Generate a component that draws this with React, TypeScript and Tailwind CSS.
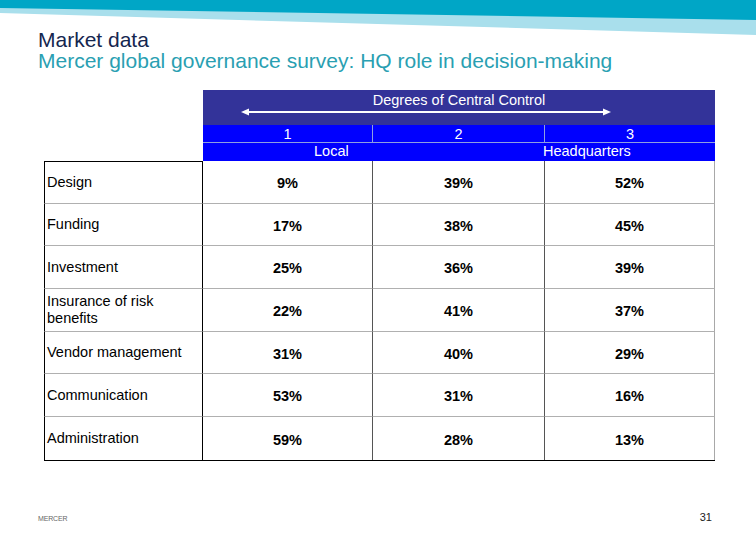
const rows = [
  { label: "Design", values: ["9%", "39%", "52%"] },
  { label: "Funding", values: ["17%", "38%", "45%"] },
  { label: "Investment", values: ["25%", "36%", "39%"] },
  { label: "Insurance of risk benefits", values: ["22%", "41%", "37%"] },
  { label: "Vendor management", values: ["31%", "40%", "29%"] },
  { label: "Communication", values: ["53%", "31%", "16%"] },
  { label: "Administration", values: ["59%", "28%", "13%"] },
];

function Banner() {
  return (
    <svg className="absolute left-0 top-0" width="756" height="40" viewBox="0 0 756 40">
      <polygon points="0,0 756,0 756,35 0,13" fill="#a9dfec" />
      <polygon points="0,0 756,0 756,20 0,8" fill="#00a6c6" />
    </svg>
  );
}

export default function App() {
  return (
    <div
      className="relative w-[756px] h-[540px] bg-white overflow-hidden flex flex-col"
      style={{ fontFamily: '"Liberation Sans", Arial, sans-serif' }}
    >
      <Banner />

      {/* Title */}
      <div className="relative pt-[29px] pl-[38px] text-[21px] leading-[21px]">
        <div className="text-[#14264f]">Market data</div>
        <div className="text-[#2a9fb2]">Mercer global governance survey: HQ role in decision-making</div>
      </div>

      {/* Table */}
      <div className="ml-[44px] mt-[19px] w-[671px] text-[14.5px] text-black">
        <div className="flex">
          <div className="w-[159px] shrink-0" />
          <div className="w-[512px] text-white">
            <div className="h-[35px] bg-[#333399] flex flex-col items-center pt-[1px]">
              <div className="leading-[18px]">Degrees of Central Control</div>
              <svg width="370" height="10" viewBox="0 0 370 10" className="-mt-[2px] -ml-[66px]">
                <line x1="4" y1="5" x2="366" y2="5" stroke="white" strokeWidth="2" />
                <polygon points="0,5 8,1.5 8,8.5" fill="white" />
                <polygon points="370,5 362,1.5 362,8.5" fill="white" />
              </svg>
            </div>
            <div className="h-[18px] bg-[#0000ff] grid grid-cols-[170px_172px_170px] leading-[18px] border-b border-[#8f9fe0]">
              <div className="text-center border-r border-[#8f9fe0]">1</div>
              <div className="text-center border-r border-[#8f9fe0]">2</div>
              <div className="text-center">3</div>
            </div>
            <div className="h-[18px] bg-[#0000ff] flex leading-[17px]">
              <div className="w-[170px] pl-[111px]">Local</div>
              <div className="w-[172px]" />
              <div className="w-[170px] -ml-[2px]">Headquarters</div>
            </div>
          </div>
        </div>

        <div className="border-b border-black">
          {rows.map((r, i) => (
            <div key={r.label} className="grid grid-cols-[159px_170px_172px_170px] h-[42.7px]">
              <div
                className={`border-x border-black pl-[2px] flex items-center leading-[17px] ${
                  i === 0 ? "border-t" : ""
                } ${i < rows.length - 1 ? "border-b border-b-[#b0b0b0]" : ""}`}
              >
                {r.label === "Insurance of risk benefits" ? (
                  <span>
                    Insurance of risk
                    <br />
                    benefits
                  </span>
                ) : (
                  r.label
                )}
              </div>
              {r.values.map((v, j) => (
                <div
                  key={j}
                  className={`flex items-center justify-center font-bold pt-[4px] ${
                    j < 2 ? "border-r border-[#555555]" : "border-r border-[#a8a8a8]"
                  } ${i < rows.length - 1 ? "border-b border-b-[#b0b0b0]" : ""}`}
                >
                  {v}
                </div>
              ))}
            </div>
          ))}
        </div>
      </div>

      {/* Footer */}
      <div className="mt-auto mb-[15px] flex items-end justify-between pl-[38px] pr-[44px]">
        <div className="text-[7px] text-[#666666] tracking-tight mb-[1px]">MERCER</div>
        <div className="text-[11px] text-[#222222]">31</div>
      </div>
    </div>
  );
}
